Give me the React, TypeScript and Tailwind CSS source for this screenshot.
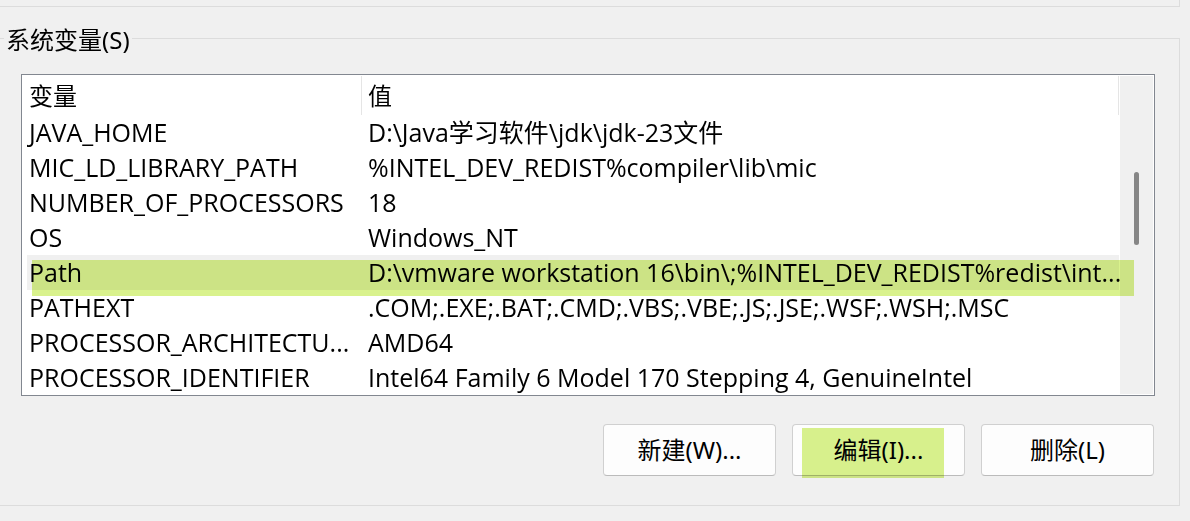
const variables = [
  { name: "JAVA_HOME", value: "D:\\Java学习软件\\jdk\\jdk-23文件" },
  { name: "MIC_LD_LIBRARY_PATH", value: "%INTEL_DEV_REDIST%compiler\\lib\\mic" },
  { name: "NUMBER_OF_PROCESSORS", value: "18" },
  { name: "OS", value: "Windows_NT" },
  {
    name: "Path",
    value: "D:\\vmware workstation 16\\bin\\;%INTEL_DEV_REDIST%redist\\int...",
    selected: true,
  },
  { name: "PATHEXT", value: ".COM;.EXE;.BAT;.CMD;.VBS;.VBE;.JS;.JSE;.WSF;.WSH;.MSC" },
  { name: "PROCESSOR_ARCHITECTU...", value: "AMD64" },
  {
    name: "PROCESSOR_IDENTIFIER",
    value: "Intel64 Family 6 Model 170 Stepping 4, GenuineIntel",
  },
];

const actions = [
  { label: "新建(W)..." },
  { label: "编辑(I)...", marked: true },
  { label: "删除(L)" },
];

function VariableTable() {
  return (
    <table className="w-full min-w-0 flex-1 table-fixed border-collapse text-left">
      <colgroup>
        <col className="w-[335px]" />
        <col />
      </colgroup>
      <thead>
        <tr className="h-10">
          <th className="p-0 font-normal">
            <div className="mt-px h-[39px] border-r border-[#e5e5e5] pl-0.5 leading-10">变量</div>
          </th>
          <th className="p-0 font-normal">
            <div className="mt-px h-[39px] border-r border-[#e5e5e5] pl-1.5 leading-10">值</div>
          </th>
        </tr>
      </thead>
      <tbody className="font-['Open_Sans','Noto_Sans_CJK_SC',sans-serif] text-[25px]">
        {variables.map((item) => (
          <tr
            key={item.name}
            className={item.selected ? "relative h-[35px] bg-[#f0f0f0]" : "h-[35px]"}
          >
            <td className="p-0 pl-0.5 leading-[35px] whitespace-nowrap">
              {item.name}
              {item.selected && (
                <span className="pointer-events-none absolute top-[5px] -right-[15px] left-[5px] h-9 bg-[#d9f28d] mix-blend-multiply" />
              )}
            </td>
            <td className="p-0 pl-1.5 leading-[35px] whitespace-nowrap">{item.value}</td>
          </tr>
        ))}
      </tbody>
    </table>
  );
}

export default function App() {
  return (
    <main className="min-h-screen bg-[#f0f0f0] pr-2.5 font-['Noto_Sans','Noto_Sans_CJK_SC',sans-serif] text-[24px] text-black">
      <div className="h-[7px] border-r border-b border-[#dcdcdc]" />
      <fieldset className="mt-[15px] min-w-0 border border-l-0 border-[#dcdcdc] pr-6 pb-[29px] pl-1">
        <legend className="px-0.5 pt-1 leading-7">系统变量(S)</legend>
        <div className="mt-5 ml-[17px] flex border border-[#828790] bg-white pr-px pl-[5px]">
          <VariableTable />
          <div className="my-px ml-px flex w-[33px] shrink-0 justify-center bg-[#f0f0f0] pr-1 pl-1 pt-24">
            <div className="h-[73px] w-[5px] rounded-full bg-[#868686]" />
          </div>
        </div>
        <div className="mt-7 mr-px flex justify-end gap-4">
          {actions.map((action) => (
            <button
              key={action.label}
              type="button"
              className="relative h-[52px] w-[173px] rounded-[4px] border border-[#d0d0d0] border-b-[#bbbbbb] bg-[#fdfdfd]"
            >
              {action.label}
              {action.marked && (
                <span className="pointer-events-none absolute top-[3px] left-[9px] h-[50px] w-[142px] bg-[#d9f28d] mix-blend-multiply" />
              )}
            </button>
          ))}
        </div>
      </fieldset>
    </main>
  );
}
